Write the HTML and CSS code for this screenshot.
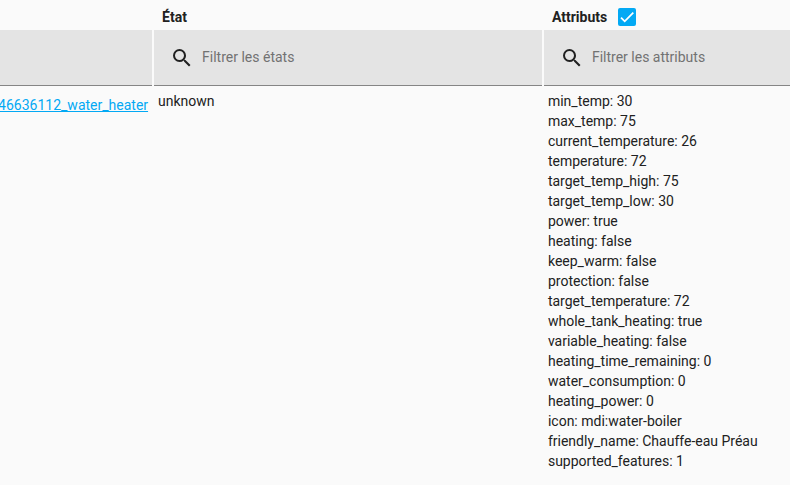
FILE: index.html
```html
<!DOCTYPE html>
<html lang="fr">
<head>
<meta charset="utf-8">
<meta name="viewport" content="width=device-width, initial-scale=1">
<title>États</title>
<link rel="stylesheet" href="styles.css">
</head>
<body>
<table class="states">
  <colgroup>
    <col class="col-entity">
    <col class="col-state">
    <col class="col-attributes">
  </colgroup>
  <thead>
    <tr class="titles">
      <th></th>
      <th scope="col">État</th>
      <th scope="col">
        <label class="toggle">Attributs
          <span class="checkbox">
            <input type="checkbox" checked>
            <svg viewBox="0 0 24 24" aria-hidden="true"><path d="M1.73 12.91 8.1 19.28 22.79 4.59"/></svg>
          </span>
        </label>
      </th>
    </tr>
    <tr class="filters">
      <th><div class="filter"></div></th>
      <th>
        <label class="filter">
          <svg class="icon" viewBox="0 0 24 24" aria-hidden="true"><path d="M9.5 3A6.5 6.5 0 0 1 16 9.5c0 1.61-.59 3.09-1.56 4.23l.27.27h.79l5 5-1.5 1.5-5-5v-.79l-.27-.27A6.516 6.516 0 0 1 9.5 16a6.5 6.5 0 0 1 0-13m0 2C7 5 5 7 5 9.5S7 14 9.5 14 14 12 14 9.5 12 5 9.5 5Z"/></svg>
          <input type="text" placeholder="Filtrer les états">
        </label>
      </th>
      <th>
        <label class="filter">
          <svg class="icon" viewBox="0 0 24 24" aria-hidden="true"><path d="M9.5 3A6.5 6.5 0 0 1 16 9.5c0 1.61-.59 3.09-1.56 4.23l.27.27h.79l5 5-1.5 1.5-5-5v-.79l-.27-.27A6.516 6.516 0 0 1 9.5 16a6.5 6.5 0 0 1 0-13m0 2C7 5 5 7 5 9.5S7 14 9.5 14 14 12 14 9.5 12 5 9.5 5Z"/></svg>
          <input type="text" placeholder="Filtrer les attributs">
        </label>
      </th>
    </tr>
  </thead>
  <tbody>
    <tr>
      <td class="entity"><div class="entity-id"><a href="#">46636112_water_heater</a></div></td>
      <td>unknown</td>
      <td class="attributes">min_temp: 30
max_temp: 75
current_temperature: 26
temperature: 72
target_temp_high: 75
target_temp_low: 30
power: true
heating: false
keep_warm: false
protection: false
target_temperature: 72
whole_tank_heating: true
variable_heating: false
heating_time_remaining: 0
water_consumption: 0
heating_power: 0
icon: mdi:water-boiler
friendly_name: Chauffe-eau Préau
supported_features: 1</td>
    </tr>
  </tbody>
</table>
</body>
</html>
```
FILE: styles.css
```css
* {
  box-sizing: border-box;
}

body {
  margin: 0;
  background: #fafafa;
  color: #212121;
  font: 14px/20px Roboto, sans-serif;
  overflow-x: hidden;
}

.states {
  width: 100%;
  table-layout: fixed;
  border-collapse: collapse;
}

.col-entity {
  width: 19.25%;
}

.col-state {
  width: 49.35%;
}

th {
  padding: 0;
  text-align: left;
  font-weight: 700;
}

.titles th {
  height: 30px;
  padding: 4px 10px 0;
}

.toggle {
  display: flex;
  align-items: center;
  gap: 11px;
}

.checkbox {
  position: relative;
  width: 18px;
  height: 18px;
}

.checkbox input {
  display: block;
  appearance: none;
  width: 18px;
  height: 18px;
  margin: 0;
  border: 2px solid #757575;
  border-radius: 2px;
}

.checkbox input:checked {
  border-color: #03a9f4;
  background: #03a9f4;
}

.checkbox svg {
  position: absolute;
  inset: 2px;
  fill: none;
  stroke: #fff;
  stroke-width: 3;
}

.filters th + th {
  padding-left: 2px;
}

.filter {
  display: flex;
  align-items: center;
  gap: 8px;
  height: 56px;
  padding: 0 16px;
  border-bottom: 1px solid #858585;
  background: #e4e4e4;
}

.icon {
  flex: none;
  width: 24px;
  height: 24px;
  fill: #212121;
}

.filter input {
  flex: 1;
  min-width: 0;
  padding: 0 0 2px;
  border: 0;
  outline: 0;
  background: none;
  color: #212121;
  font: 400 14px/20px Roboto, sans-serif;
}

.filter input::placeholder {
  color: #727272;
  opacity: 1;
}

td {
  padding: 5px 6px;
  vertical-align: top;
}

.entity {
  padding: 9px 4px 4px 0;
}

.entity-id {
  display: flex;
  justify-content: flex-end;
}

.entity a {
  color: #03a9f4;
}

.attributes {
  white-space: pre-line;
}
```
